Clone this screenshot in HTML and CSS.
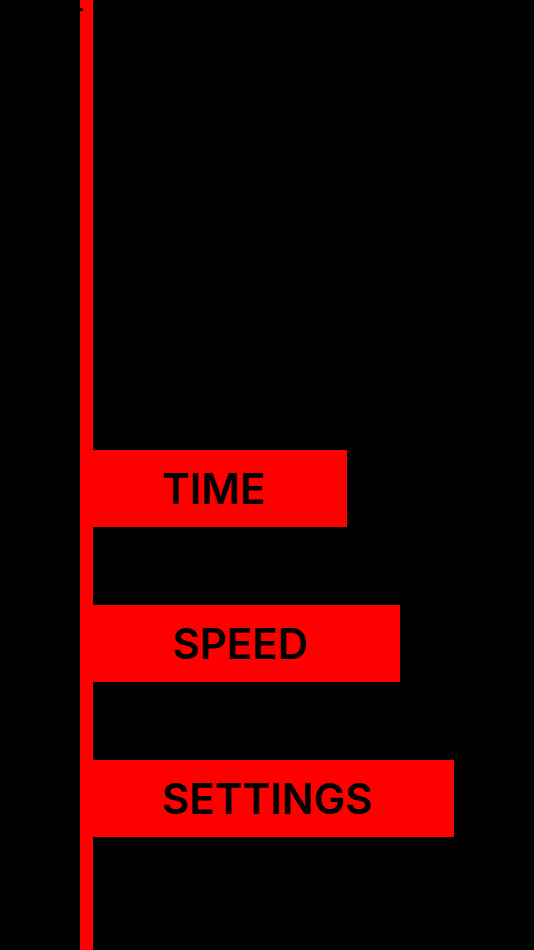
FILE: index.html
```html
<!DOCTYPE html>
<html lang="en">
<head>
<meta charset="utf-8">
<title>Menu</title>
<link rel="stylesheet" href="styles.css">
</head>
<body>
<div class="screen">
  <nav class="rail">
    <span class="notch"></span>
    <a class="item item-time" href="#">TIME</a>
    <a class="item item-speed" href="#">SPEED</a>
    <a class="item item-settings" href="#">SETTINGS</a>
  </nav>
</div>
</body>
</html>
```

FILE: styles.css
```css
html, body {
  margin: 0;
  padding: 0;
  background: #000;
}

.screen {
  width: 534px;
  height: 950px;
  background: #000;
  overflow: hidden;
}

.rail {
  position: relative;
  margin-left: 80px;
  border-left: 13px solid #ff0000;
  height: 950px;
  box-sizing: border-box;
  padding-top: 450px;
  display: flex;
  flex-direction: column;
  align-items: flex-start;
  gap: 78px;
}

.notch {
  position: absolute;
  left: -15px;
  top: 8px;
  width: 5px;
  height: 3px;
  background: #000;
  border-radius: 1px;
}

.item {
  margin-left: -13px;
  height: 77px;
  background: #ff0000;
  color: #000;
  text-decoration: none;
  font-family: Inter, "Liberation Sans", sans-serif;
  font-size: 42px;
  font-weight: 600;
  display: flex;
  align-items: center;
  justify-content: center;
  letter-spacing: 0;
}

.item-time { width: 267px; }
.item-speed { width: 320px; }
.item-settings { width: 374px; }
```
